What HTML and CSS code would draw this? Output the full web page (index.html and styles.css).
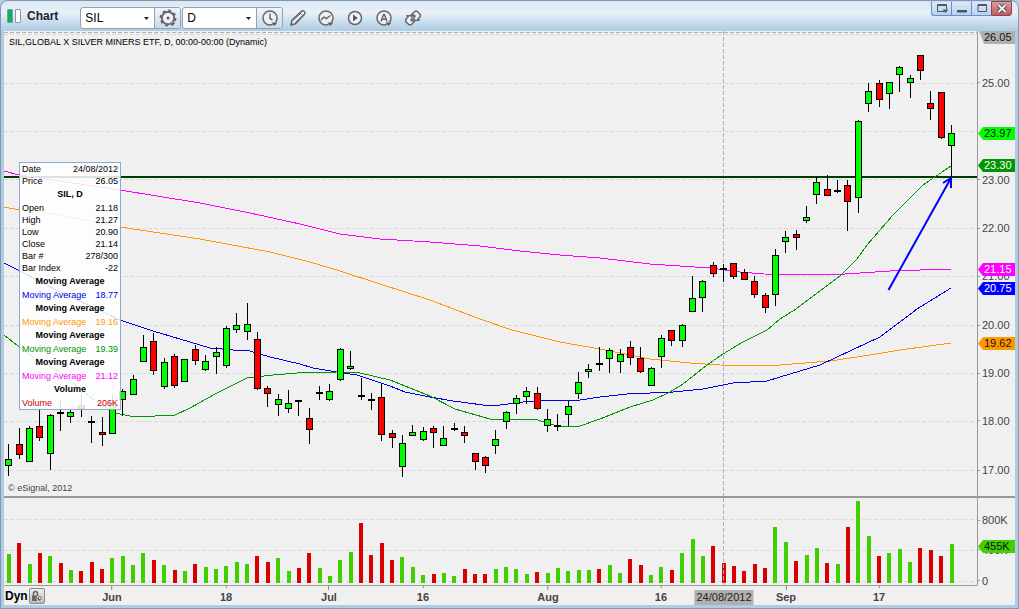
FILE: index.html
```html
<!DOCTYPE html>
<html lang="en">
<head>
<meta charset="utf-8">
<title>Chart</title>
<link rel="stylesheet" href="styles.css">
</head>
<body>
<main class="window">
  <header class="titlebar">
    <span class="link-mark"><i class="mark-on"></i><i class="mark-off"></i></span>
    <h1 class="title">Chart</h1>
    <div class="tools">
      <div class="field">
        <span class="combo">
          <select aria-label="Symbol"><option>SIL</option></select>
          <svg class="caret" viewBox="0 0 5 3"><path d="M0 0h5L2.500 3z"/></svg>
        </span>
        <button class="field-btn" aria-label="Settings">
          <svg class="icon" viewBox="0 0 18 18"><circle cx="9" cy="9" r="6.200" class="ln thick"/><circle cx="9" cy="9" r="7.400" class="ln teeth"/><circle cx="9" cy="9" r="1.500" class="fl"/><path class="fl halo" d="M10.500 13.500h6l-3 3.500z"/></svg>
        </button>
      </div>
      <div class="field">
        <span class="combo">
          <select aria-label="Interval"><option>D</option></select>
          <svg class="caret" viewBox="0 0 5 3"><path d="M0 0h5L2.500 3z"/></svg>
        </span>
        <button class="field-btn" aria-label="Time template">
          <svg class="icon" viewBox="0 0 18 18"><circle cx="9" cy="9" r="7" class="ln disc"/><path class="ln" d="M9 4.500V9.500L11.500 11"/><path class="fl halo" d="M10.500 13.500h6l-3 3.500z"/></svg>
        </button>
      </div>
      <button class="tool draw" aria-label="Draw">
        <svg class="icon" viewBox="0 0 18 18"><path class="ln disc" d="M2 16l1-5L12.500 2.200q1.500-1 2.800.3t.2 2.800L6.500 14.800z"/><path class="ln thin" d="M4 11.500l8.300-7.800M6 13.800l8.500-8M11 4l3 3"/><path class="fl" d="M1.500 16.500l.8-3 2.200 2.200z"/></svg>
      </button>
      <button class="tool" aria-label="Studies">
        <svg class="icon" viewBox="0 0 18 18"><circle cx="9" cy="9" r="7" class="ln disc"/><path class="ln" d="M4 11l3-3 2.200 1.700L13.500 6.500"/><path class="fl halo" d="M10.500 13.500h6l-3 3.500z"/></svg>
      </button>
      <button class="tool" aria-label="Play">
        <svg class="icon" viewBox="0 0 18 18"><circle cx="9" cy="9" r="6.500" class="ln disc"/><path class="fl" d="M7 5.500v7L11.800 9z"/></svg>
      </button>
      <button class="tool" aria-label="Alerts">
        <svg class="icon" viewBox="0 0 18 18"><circle cx="9" cy="9" r="7" class="ln disc"/><path class="ln" d="M6 12.500L8.600 5.500h.8L12 12.500M7 10.200h4"/><path class="fl halo" d="M10.500 13.500h6l-3 3.500z"/></svg>
      </button>
      <button class="tool" aria-label="Link">
        <svg class="icon" viewBox="0 0 18 18"><path class="ln disc" d="M7.500 5.500L11 2.200h2L16.300 5.500v2L14 10l1.200 1.200H10V6l1.200 1.200z"/><path class="ln disc" d="M10.500 12.500L7 15.800H5L1.700 12.500v-2L4 8 2.800 6.800H8V12L6.800 10.800z"/></svg>
      </button>
    </div>
    <div class="win-btns">
      <button aria-label="Window menu"><svg viewBox="0 0 14 11"><path class="glyph" d="M9 8.500H2.500V1.500h9V6"/><path class="glyph" d="M2 2.500h10"/><path class="glyph-fill" d="M7.500 6.500h6l-3 3.500z"/></svg></button>
      <button aria-label="Minimize"><svg viewBox="0 0 14 11"><path class="glyph-fill" d="M2 7h10v2.500H2z"/></svg></button>
      <button aria-label="Maximize"><svg viewBox="0 0 14 11"><path class="glyph" d="M3 1.500h8.500v7H3z"/><path class="glyph" d="M2.500 2.500h9.500"/></svg></button>
      <button class="close" aria-label="Close"><svg viewBox="0 0 14 11"><path class="cross-back" d="M3.500 2l7 7M10.500 2l-7 7"/><path class="cross" d="M3.500 2l7 7M10.500 2l-7 7"/></svg></button>
    </div>
  </header>

  <section class="chart">
    <div class="pane price">
      <svg id="price" viewBox="4 31 973 465" preserveAspectRatio="none"></svg>
      <p class="caption">SIL,GLOBAL X SILVER MINERS ETF, D, 00:00-00:00 (Dynamic)</p>
      <p class="copyright">© eSignal, 2012</p>
      <table class="readout">
        <tbody>
          <tr><td>Date</td><td>24/08/2012</td></tr>
          <tr><td>Price</td><td>26.05</td></tr>
          <tr><th colspan="2">SIL, D</th></tr>
          <tr><td>Open</td><td>21.18</td></tr>
          <tr><td>High</td><td>21.27</td></tr>
          <tr><td>Low</td><td>20.90</td></tr>
          <tr><td>Close</td><td>21.14</td></tr>
          <tr><td>Bar #</td><td>278/300</td></tr>
          <tr><td>Bar Index</td><td>-22</td></tr>
          <tr><th colspan="2">Moving Average</th></tr>
          <tr class="c-blue"><td>Moving Average</td><td>18.77</td></tr>
          <tr><th colspan="2">Moving Average</th></tr>
          <tr class="c-orange"><td>Moving Average</td><td>19.16</td></tr>
          <tr><th colspan="2">Moving Average</th></tr>
          <tr class="c-green"><td>Moving Average</td><td>19.39</td></tr>
          <tr><th colspan="2">Moving Average</th></tr>
          <tr class="c-magenta"><td>Moving Average</td><td>21.12</td></tr>
          <tr><th colspan="2">Volume</th></tr>
          <tr class="c-red"><td>Volume</td><td>206K</td></tr>
        </tbody>
      </table>
    </div>
    <div class="scale" id="price-scale"></div>
    <div class="pane volume"><svg id="volume" viewBox="4 498 973 87" preserveAspectRatio="none"></svg></div>
    <div class="scale volume-scale" id="volume-scale"></div>
    <footer class="dates">
      <div class="date-track" id="dates"></div>
      <span class="dyn">Dyn</span>
      <button class="lock" aria-label="Lock time range">
        <svg viewBox="0 0 12 12"><path class="shackle" d="M2.500 6V3.500a2 2 0 0 1 4 0V6"/><path class="lock-body" d="M1 5.500h5.500v5.500H1z"/><circle class="lock-clock" cx="8.500" cy="8.500" r="2.700"/><path class="lock-hand" d="M8.500 7v1.500H10"/></svg>
      </button>
    </footer>
  </section>
</main>
<script src="chart.js"></script>
</body>
</html>
```
FILE: styles.css
```css
* { box-sizing: border-box; }
html, body { height: 100%; }
body {
  margin: 0;
  background: #b3cde3;
  font-family: "Liberation Sans", Arial, sans-serif;
  font-size: 11px;
  color: #000;
}
button, select { font: inherit; color: inherit; padding: 0; margin: 0; }
svg { display: block; }

.window {
  height: 100vh;
  min-height: 480px;
  display: flex;
  flex-direction: column;
  border: 1px solid #7f97b0;
  border-radius: 8px 8px 0 0;
  background: #b0cce3;
  padding: 0 3px 3px;
}

/* title bar */
.titlebar {
  flex: none;
  height: 30px;
  margin: 0 -3px;
  padding: 0 6px;
  display: flex;
  align-items: center;
  border-radius: 7px 7px 0 0;
  background: linear-gradient(#dbe7f2 0, #e9f1f8 12px, #dce9f4 15px, #b0cde4 29px);
}
.link-mark { display: flex; gap: 2px; }
.link-mark i { width: 6px; height: 14px; border: 1px solid #8298ac; border-radius: 1px; }
.mark-on { background: #0cb457; border-color: #17854b; }
.mark-off { background: #fff; }
.title { margin: 0 22px 0 6px; font-size: 12px; line-height: 16px; color: #1c2430; }
.tools { flex: 1; display: flex; align-items: center; align-self: flex-end; height: 27px; }
.field {
  display: flex;
  width: 101px;
  height: 22px;
  margin-right: 1px;
  border: 1px solid #8fa3b7;
  border-radius: 3px;
  background: #fff;
}
.combo { position: relative; flex: 1; }
.combo select {
  width: 100%;
  height: 20px;
  border: 0;
  padding-left: 4px;
  background: none;
  appearance: none;
  font-size: 12px;
}
.caret { position: absolute; right: 5px; top: 9px; width: 5px; height: 3px; fill: #222; pointer-events: none; }
.field-btn {
  width: 26px;
  border: 0;
  border-left: 1px solid #8fa3b7;
  border-radius: 0 2px 2px 0;
  background: linear-gradient(#f0f5fa, #c8dcec);
  display: grid;
  place-items: center;
}
.tool { width: 29px; height: 22px; border: 0; background: none; display: grid; place-items: center; }
.tool.draw { width: 27px; }
.icon { width: 18px; height: 18px; }
.ln { fill: none; stroke: #66666c; stroke-width: 1.500; stroke-linejoin: round; }
.disc { fill: #f0f1f3; }
.thick { fill: #f0f1f3; stroke-width: 2; }
.thin { stroke-width: 1; }
.teeth { stroke-width: 2; stroke-dasharray: 2.900 2.900; }
.fl { fill: #5a5a60; }
.halo { stroke: #dce8f2; stroke-width: 1; paint-order: stroke; }

.win-btns { display: flex; align-self: flex-start; border-radius: 0 0 4px 4px; }
.win-btns button {
  width: 20px;
  height: 15px;
  border: 1px solid #6a8fbe;
  border-right: 0;
  border-top-color: #c6daf0;
  background: linear-gradient(#dbe9fa, #b8d1ef);
  display: grid;
  place-items: center;
}
.win-btns button:first-child { border-radius: 0 0 0 3px; }
.win-btns .close {
  width: 21px;
  border-color: #97414a;
  border-right: 1px solid #97414a;
  border-radius: 0 0 3px 0;
  background: linear-gradient(#d99a9d, #bd5a60);
}
.win-btns svg { width: 14px; height: 11px; }
.glyph { fill: none; stroke: #50565e; stroke-width: 1; }
.glyph-fill { fill: #50565e; }
.cross-back { stroke: #504c50; stroke-width: 4; }
.cross { stroke: #f2f2f2; stroke-width: 2; }

/* chart body */
.chart {
  flex: 1;
  min-height: 0;
  display: grid;
  grid-template-columns: minmax(0, 1fr) 38px;
  grid-template-rows: minmax(0, 1fr) 90px 19px;
  background: #f0f0f0;
}
.pane { position: relative; min-height: 0; }
.pane > svg { width: 100%; height: 100%; }
.caption, .copyright { position: absolute; left: 5px; margin: 0; font-size: 9px; line-height: 12px; white-space: nowrap; }
.caption { top: 5px; }
.copyright { bottom: 2px; color: #444; left: 4px; }
.volume, .volume-scale { border-top: 2px solid #999; border-bottom: 1px solid #999; }
.volume-scale { border-bottom-color: #f0f0f0; }

.readout {
  position: absolute;
  left: 15px;
  top: 131px;
  display: block;
  width: 102px;
  border: 1px solid #8babcf;
  background: rgba(255, 255, 255, 0.86);
  font-size: 9px;
  line-height: 12px;
  white-space: nowrap;
}
.readout tbody { display: block; }
.readout tr { display: flex; justify-content: space-between; padding: 0 2px; }
.readout td { padding: 0; }
.readout th { flex: 1; padding: 0; line-height: 15px; text-align: center; }
.c-blue { color: #00d; }
.c-orange { color: #ff9900; }
.c-green { color: #009600; }
.c-magenta { color: #f0f; }
.c-red { color: #d00000; }

/* value scales */
.scale { position: relative; border-left: 1px solid #999; }
.tick { position: absolute; left: 0; display: flex; align-items: center; gap: 2px; height: 14px; margin-top: -7px; color: #444; }
.tick::before { content: ""; width: 2px; height: 1px; background: #999; }
.tag {
  position: absolute;
  left: 0;
  right: 0;
  height: 13px;
  margin-top: -6px;
  padding-left: 6px;
  line-height: 13px;
  color: #fff;
  clip-path: polygon(0 50%, 5px 0, 100% 0, 100% 100%, 5px 100%);
}
.tag.cursor { clip-path: polygon(1px 0, 100% 0, 100% 100%, 6px 100%); background: #b0b0b0; color: #111; }
.tag.last { background: #00ff00; color: #111; }
.tag.green { background: #009600; }
.tag.magenta { background: #ff00ff; }
.tag.blue { background: #0000ff; }
.tag.orange { background: #ff9900; color: #111; }
.tag.vol { background: #40d000; color: #111; }

/* date scale */
.dates { grid-column: 1 / 3; position: relative; display: flex; align-items: center; padding-left: 1px; padding-right: 38px; }
.dyn { font-size: 12px; font-weight: bold; }
.lock {
  width: 16px;
  height: 16px;
  margin-left: 1px;
  border: 1px solid #8a8a8a;
  border-radius: 2px;
  background: linear-gradient(#eee, #bbb);
  display: grid;
  place-items: center;
}
.lock svg { width: 12px; height: 12px; }
.shackle { fill: none; stroke: #666; stroke-width: 1.500; }
.lock-body, .lock-clock { fill: #666; }
.lock-clock { stroke: #ddd; stroke-width: 1; }
.lock-hand { fill: none; stroke: #eee; stroke-width: 1; }
.date-track { position: absolute; left: 0; right: 38px; top: 0; bottom: 0; }
.date { position: absolute; top: 0; transform: translateX(-50%); display: flex; flex-direction: column; align-items: center; color: #444; font-weight: bold; line-height: 15px; }
.date::before { content: ""; width: 1px; height: 2px; margin-bottom: 2px; background: #888; }
.date.month::before { height: 4px; margin-bottom: 0; }
.date.cursor { top: 4px; padding: 0 2px; background: #b0b0b0; color: #222; font-weight: normal; }
.date.cursor::before { display: none; }

/* drawing */
svg .grid { fill: none; stroke: #dadada; stroke-width: 1; stroke-dasharray: 4 2; shape-rendering: crispEdges; }
svg .cursor-line { stroke: #b0b0b0; stroke-width: 1; stroke-dasharray: 4 2; shape-rendering: crispEdges; }
svg .level { stroke: #003c00; stroke-width: 2; shape-rendering: crispEdges; }
svg .ma { fill: none; stroke-width: 1; shape-rendering: crispEdges; }
.ma.magenta { stroke: #ff00ff; }
.ma.orange { stroke: #ff9900; }
.ma.blue { stroke: #0000e6; }
.ma.green { stroke: #009600; }
svg .wick { fill: #000; shape-rendering: crispEdges; }
svg .body { stroke: #000; stroke-width: 1; shape-rendering: crispEdges; }
.body.up { fill: #00ff00; }
.body.down { fill: #ff0000; }
svg .vbar { shape-rendering: crispEdges; }
.vbar.up { fill: #40d000; }
.vbar.down { fill: #d80000; }
svg .arrow { fill: none; stroke: #0000ff; stroke-width: 2; }
```
FILE: chart.js
```js
// Each candle: high, body top, body bottom, low, colour (g = up, r = down, d = unchanged)
const candles = `444 459 466 476 g|428 444 455 459 r|426 428 462 462 g|408 426 438 441 r|414 415 454 470 g
400 412 414 431 d|407 412 417 423 g|395 405 409 417 r|416 421 423 443 d|417 432 435 446 r
395 403 434 434 g|389 391 400 416 g|375 379 395 395 g|335 347 362 362 g|333 341 371 375 r
358 362 387 389 g|354 356 386 388 r|359 359 382 382 g|345 349 361 365 r|355 361 370 371 g
347 352 357 374 g|326 328 366 368 g|313 325 330 333 g|303 324 332 340 g|332 339 389 390 r
386 388 394 407 r|394 399 405 416 g|390 403 409 413 g|400 400 402 416 d|408 418 430 444 r
386 392 394 400 d|384 391 400 401 g|348 349 380 381 g|351 366 369 370 g|378 395 397 400 d
393 399 401 410 d|384 397 435 441 r|430 433 438 448 r|435 443 467 477 g|425 432 436 436 g
427 431 440 441 g|426 428 433 448 r|426 438 446 446 g|423 428 430 431 d|426 432 436 443 r
453 453 462 470 r|456 457 466 473 r|430 439 446 454 g|411 412 422 429 g|395 398 404 414 g
387 391 397 404 g|387 393 409 410 r|409 419 426 432 g|414 425 427 431 d|401 406 415 426 g
372 382 394 399 g|364 369 372 378 g|347 363 365 371 d|348 350 359 373 g|349 354 362 373 g
341 347 358 365 r|347 358 372 373 r|367 368 386 386 g|335 338 357 368 g|330 330 341 346 r
324 325 341 347 g|276 298 312 312 g|280 281 298 312 g|262 265 274 277 r|264 268 270 282 d
263 263 277 279 r|269 272 280 280 r|276 281 295 298 r|293 295 308 313 r|249 255 295 306 g
231 237 242 253 g|230 234 238 250 r|206 217 221 223 g|177 182 195 204 g|175 189 196 196 r
180 190 192 193 d|180 185 202 231 r|120 121 198 213 g|83 91 104 112 g|80 83 100 107 r
82 82 94 109 g|66 67 75 92 g|75 78 83 98 g|55 55 71 80 r|91 103 109 120 r
92 92 138 139 r|125 133 146 177 g`.split(/[|\n]/).map(s => s.trim().split(' '));

const volumes = `554g 543r 564g 553r 556g 563r 570g 571r 562r 569r 558g 556g 565g 553g 560r 565g 570r 571g 564r 567g 569g 566g 562g 564g 556r 562r 558g 571g 568r 553r 568g 576g 560g
552g 523r 555r 543r 560r 557g 567g 575g 574r 573g 576g 569r 574r 574r 569g 567g 569g 574g 572r 573g 568g 571g 570g 570g 569r 565g 573g 559r 565r 575g 567g 570r
553g 539g 556g 546r 563r 566r 571r 564r 568r 527g 542g 561r 555g 548g 563r 564g 527r 501g 536g 556r 553g 549g 562g 548r 550r 556r 544g`.split(/\s+/);

const averages = {
  magenta: '4,171 19,175 120,190 200,203 250,213 300,224 340,234 380,239 430,242 480,246 520,251 560,255 600,258 650,264 710,268 740,272 764,274 815,275 845,274 890,271 951,269',
  orange: '4,207 20,210 60,215 120,227 200,239 270,252 310,262 340,271 380,284 430,300 480,319 512,330 560,342 600,349 650,359 690,363 720,365 765,366 780,365 830,361 870,355 900,350 951,343',
  blue: '4,263 20,271 60,292 120,320 153,331 190,342 210,348 233,350 250,351 270,357 300,364 313,368 337,372 357,375 390,386 405,392 430,397 453,401 483,405 500,405 523,402 547,400 580,400 600,397 627,394 673,392 703,389 733,383 767,381 780,377 820,365 852,350 880,337 900,322 917,309 951,288',
  green: '4,335 27,353 60,372 90,397 115,413 135,417 175,415 190,408 217,393 247,378 273,375 297,373 337,372 360,373 390,380 430,396 455,409 490,419 503,420 523,419 538,420 557,426 570,427 580,426 600,419 630,407 653,400 670,392 683,384 707,365 723,354 743,342 767,330 780,319 796,309 840,276 857,259 867,245 893,215 923,185 951,166'
};

const barX = i => 8.8 + 10.36 * i;
const hline = (y, cls) => `<path class="${cls}" d="M4 ${y + 0.5}H977"/>`;

let price = [34, 83, 131, 179, 228, 276, 325, 373, 421, 470].map(y => hline(y, 'grid')).join('');
price += hline(32, 'cursor-line') + '<path class="cursor-line" d="M723.5 31V496"/>';
price += '<path class="level" d="M4 177H977"/>';
for (const [name, points] of Object.entries(averages)) {
  price += `<polyline class="ma ${name}" points="${points}"/>`;
}
candles.forEach(([high, top, bottom, low, kind], i) => {
  const x = Math.floor(barX(i));
  price += `<rect class="wick" x="${x}" y="${high}" width="1" height="${low - high}"/>`;
  price += kind === 'd'
    ? `<rect class="wick" x="${x - 3}" y="${top}" width="7" height="2"/>`
    : `<rect class="body ${kind === 'g' ? 'up' : 'down'}" x="${x - 2.5}" y="${+top + 0.5}" width="6" height="${bottom - top - 1}"/>`;
});
price += '<path class="arrow" d="M888.500 290L951 178M943 183L951 178V188"/>';
document.getElementById('price').innerHTML = price;

let volume = [519, 550, 581].map(y => hline(y, 'grid')).join('');
volumes.forEach((v, i) => {
  const y = parseInt(v, 10);
  volume += `<rect class="vbar ${v.endsWith('g') ? 'up' : 'down'}" x="${Math.round(barX(i)) - 2}" y="${y}" width="4" height="${583 - y}"/>`;
});
volume += '<path class="cursor-line" d="M723.5 498V585"/>';
document.getElementById('volume').innerHTML = volume;

const place = (y, top, height) => `top:${((y - top) / height * 100).toFixed(2)}%`;
const scale = (id, top, height, ticks, tags) => {
  document.getElementById(id).innerHTML =
    ticks.map(([y, t]) => `<span class="tick" style="${place(y, top, height)}">${t}</span>`).join('') +
    tags.map(([y, t, c]) => `<span class="tag ${c}" style="${place(y, top, height)}">${t}</span>`).join('');
};
// 24.00 is left unlabelled: the last-price tag covers it
scale('price-scale', 31, 465,
  [[83, '25.00'], [180, '23.00'], [228, '22.00'], [276, '21.00'], [325, '20.00'], [373, '19.00'], [421, '18.00'], [470, '17.00']],
  [[37, '26.05', 'cursor'], [133, '23.97', 'last'], [165, '23.30', 'green'], [269, '21.15', 'magenta'], [288, '20.75', 'blue'], [343, '19.62', 'orange']]);
scale('volume-scale', 498, 87,
  [[520, '800K'], [550, '400K'], [581, '0']],
  [[546, '455K', 'vol']]);

document.getElementById('dates').innerHTML = [
  [112, 'Jun', 'month'], [226, '18', ''], [329, 'Jul', 'month'], [423, '16', ''], [548, 'Aug', 'month'],
  [661, '16', ''], [724, '24/08/2012', 'cursor'], [786, 'Sep', 'month'], [879, '17', '']
].map(([x, t, c]) => `<span class="date ${c}" style="left:${((x - 4) / 973 * 100).toFixed(2)}%">${t}</span>`).join('');
```
